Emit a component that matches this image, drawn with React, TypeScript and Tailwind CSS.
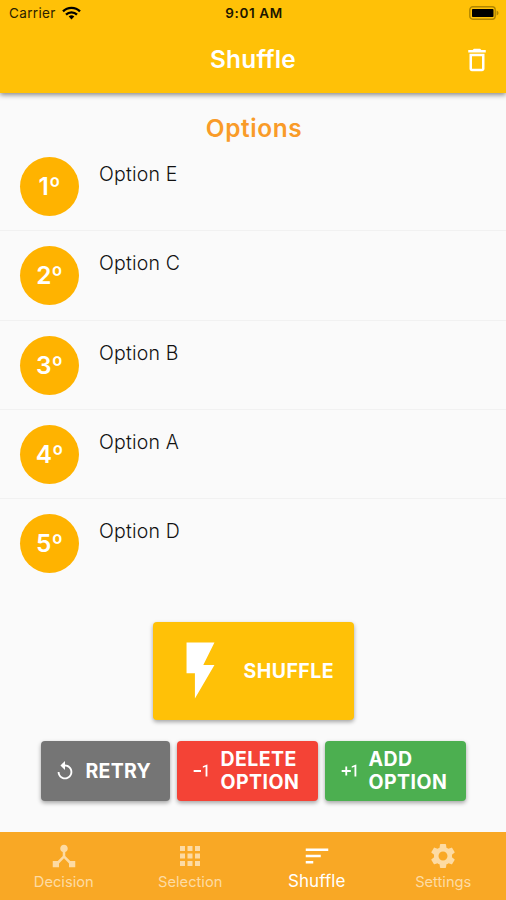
import type { IconType } from 'react-icons'
import {
  MdApps,
  MdDeleteOutline,
  MdDeviceHub,
  MdExposureNeg1,
  MdExposurePlus1,
  MdFlashOn,
  MdReplay,
  MdSettings,
  MdSort,
} from 'react-icons/md'

const options = ['Option E', 'Option C', 'Option B', 'Option A', 'Option D']

interface Tab {
  label: string
  icon: IconType
  active?: boolean
}

const tabs: Tab[] = [
  { label: 'Decision', icon: MdDeviceHub },
  { label: 'Selection', icon: MdApps },
  { label: 'Shuffle', icon: MdSort, active: true },
  { label: 'Settings', icon: MdSettings },
]

function StatusBar() {
  return (
    <div className="grid grid-cols-[1fr_auto_1fr] items-center h-[26px] pl-[9px] pr-[7px] text-[#2b2100]">
      <div className="flex items-center gap-[6px]">
        <span className="text-[13.5px] tracking-[0.35px]">Carrier</span>
        <svg className="w-[19px] h-[14px]" viewBox="0 0 19 14" fill="none" stroke="black" strokeWidth={2.3}>
          <path d="M1 5.4a12 12 0 0 1 17 0" />
          <path d="M4 8.6a7.8 7.8 0 0 1 11 0" />
          <path d="M9.5 13.4l-2.8-2.9a4 4 0 0 1 5.6 0z" fill="black" stroke="none" />
        </svg>
      </div>
      <span className="text-[13.5px] font-semibold text-[#1c1600] tracking-[0.6px]">9:01 AM</span>
      <svg className="w-[30px] h-[14px] justify-self-end" viewBox="0 0 30 14">
        <rect x="0.8" y="0.8" width="25.4" height="12.4" rx="3" fill="none" stroke="#b08600" strokeWidth={1.4} />
        <rect x="3" y="3" width="21.5" height="8" rx="0.8" fill="black" />
        <path d="M27.6 4.5v5c1.2-.5 1.9-1.4 1.9-2.5s-.7-2-1.9-2.5z" fill="#b08600" />
      </svg>
    </div>
  )
}

export default function App() {
  return (
    <div className="flex flex-col w-[506px] h-[900px] overflow-hidden bg-[#fafafa] font-['Inter',sans-serif]">
      <header className="h-[93px] shrink-0 bg-[#ffc107] shadow-[0_2px_5px_rgba(0,0,0,0.45)]">
        <StatusBar />
        <div className="grid grid-cols-[1fr_auto_1fr] items-center h-[67px] px-[14px]">
          <span />
          <h1 className="text-[24.4px] font-semibold tracking-[0.2px] text-white">Shuffle</h1>
          <button className="justify-self-end text-white" aria-label="Delete all">
            <MdDeleteOutline size={30} />
          </button>
        </div>
      </header>

      <main className="flex flex-col flex-1">
        <h2 className="h-[49px] pt-[17px] pl-[2px] text-center text-[24.4px] leading-[36px] font-semibold tracking-[0.6px] text-[#f99b28]">
          Options
        </h2>
        <ul>
          {options.map((option, index) => (
            <li
              key={option}
              className="flex h-[89.3px] gap-5 pl-5 pt-[15px] border-b border-[#f1f1f1] last:border-transparent"
            >
              <span className="flex items-center justify-center size-[59px] rounded-full bg-[#ffb300] text-[24.4px] font-semibold text-white">
                {index + 1}º
              </span>
              <span className="pt-[3px] text-[19.5px] leading-[29px] font-light tracking-[0.2px] text-[#111]">
                {option}
              </span>
            </li>
          ))}
        </ul>

        <div className="flex justify-center mt-[34px]">
          <button className="flex items-center w-[201px] h-[98px] pl-[14px] rounded-[4px] bg-[#ffc107] text-white shadow-[0_2px_4px_rgba(0,0,0,0.35)]">
            <MdFlashOn size={67} className="mb-[2px]" />
            <span className="ml-[10px] text-[19.5px] font-bold tracking-[0.45px]">SHUFFLE</span>
          </button>
        </div>

        <div className="flex justify-center gap-[7px] mt-[21px] text-left text-[19.5px] leading-[23px] font-bold text-white">
          <button className="flex items-center w-[129px] h-[60px] pl-[13px] gap-[10px] rounded-[4px] bg-[#757575] shadow-[0_2px_4px_rgba(0,0,0,0.35)]">
            <MdReplay size={22} />
            <span className="tracking-[0.3px]">RETRY</span>
          </button>
          <button className="flex items-center w-[141px] h-[60px] pl-[13px] gap-[9px] rounded-[4px] bg-[#f44336] text-left shadow-[0_2px_4px_rgba(0,0,0,0.35)]">
            <MdExposureNeg1 size={22} />
            <span className="tracking-[0.45px]">
              DELETE
              <br />
              OPTION
            </span>
          </button>
          <button className="flex items-center w-[141px] h-[60px] pl-[13px] gap-[9px] rounded-[4px] bg-[#4caf50] text-left shadow-[0_2px_4px_rgba(0,0,0,0.35)]">
            <MdExposurePlus1 size={22} />
            <span className="tracking-[0.45px]">
              ADD
              <br />
              OPTION
            </span>
          </button>
        </div>
      </main>

      <nav className="grid grid-cols-4 h-[68px] shrink-0 bg-[#f9a825]">
        {tabs.map(({ label, icon: Icon, active }) => (
          <button
            key={label}
            className={`flex flex-col items-center pl-px pt-[9px] ${active ? 'text-white' : 'text-[#fddba3]'}`}
          >
            <Icon size={30} />
            <span
              className={
                active
                  ? 'text-[17px] leading-[20px] tracking-[0.1px]'
                  : 'pt-px text-[14.7px] leading-[20px]'
              }
            >
              {label}
            </span>
          </button>
        ))}
      </nav>
    </div>
  )
}
